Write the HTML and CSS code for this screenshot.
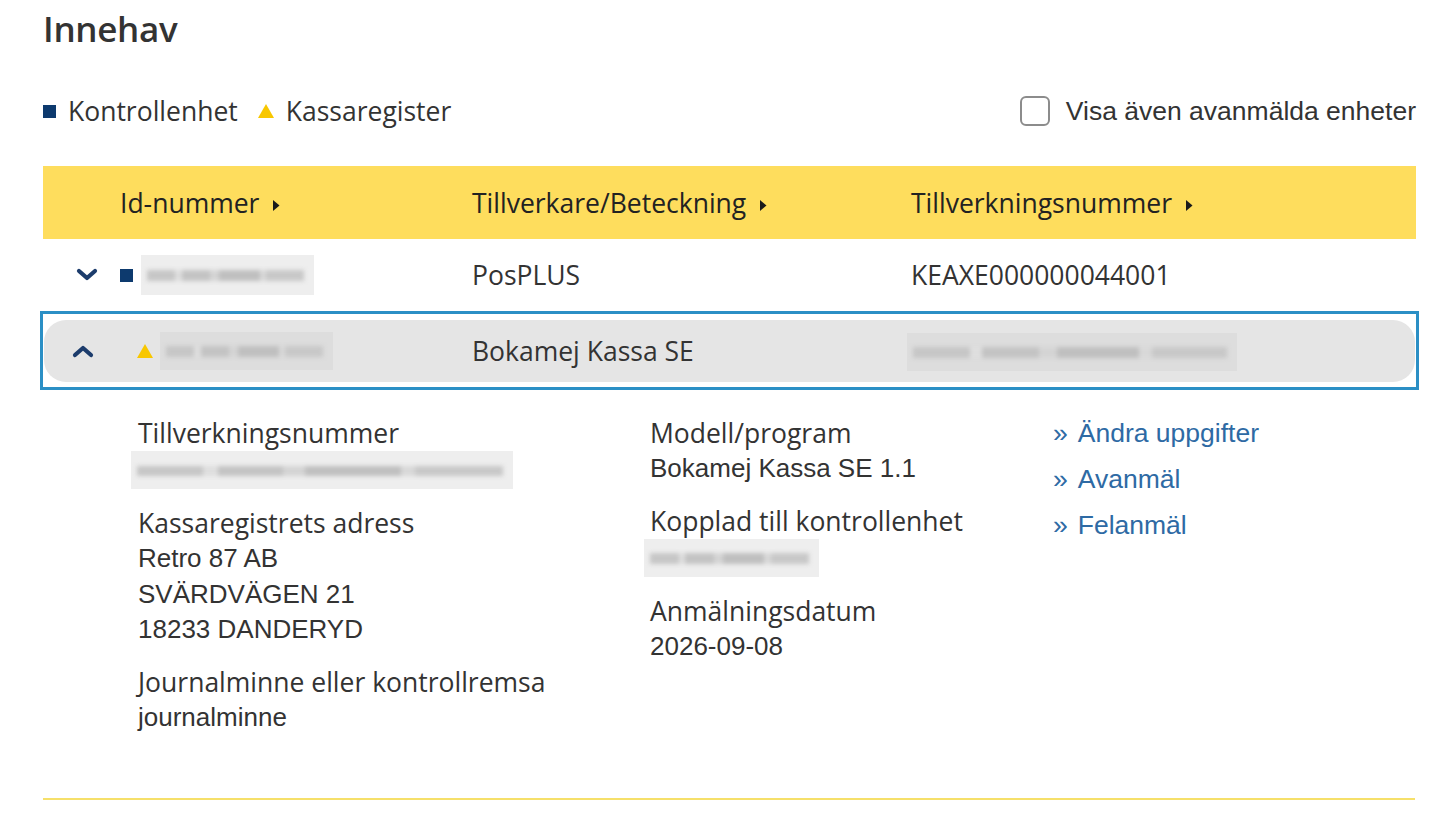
FILE: index.html
```html
<!DOCTYPE html>
<html lang="sv">
<head>
  <meta charset="UTF-8" />
  <meta name="viewport" content="width=device-width, initial-scale=1" />
  <title>Innehav</title>
  <link rel="stylesheet" href="styles.css">
</head>
<body>
  <main class="holdings">
    <h1>Innehav</h1>

    <div class="toolbar">
      <div class="legend">
        <span class="mark-square"></span>
        <span class="legend-text">Kontrollenhet</span>
        <span class="mark-triangle"></span>
        <span class="legend-text">Kassaregister</span>
      </div>
      <label class="show-all">
        <span class="checkbox"></span>
        Visa även avanmälda enheter
      </label>
    </div>

    <div class="units">
      <!-- table head -->
      <div class="units-head units-grid">
        <span></span>
        <span class="sort">Id-nummer <svg class="caret" width="8" height="13" viewBox="0 0 8 13"><path d="M1 1 L7.5 6.5 L1 12 Z" fill="#1a1a1a"/></svg></span>
        <span class="sort">Tillverkare/Beteckning <svg class="caret" width="8" height="13" viewBox="0 0 8 13"><path d="M1 1 L7.5 6.5 L1 12 Z" fill="#1a1a1a"/></svg></span>
        <span class="sort">Tillverkningsnummer <svg class="caret" width="8" height="13" viewBox="0 0 8 13"><path d="M1 1 L7.5 6.5 L1 12 Z" fill="#1a1a1a"/></svg></span>
      </div>

      <!-- control unit -->
      <div class="units-row units-grid">
        <span class="toggle">
          <svg width="22" height="14" viewBox="0 0 22 14"><polyline points="3,3 11,10 19,3" fill="none" stroke="#1c3c6c" stroke-width="4.2" stroke-linecap="round" stroke-linejoin="round"/></svg>
        </span>
        <span class="id-cell">
          <span class="mark-square"></span>
          <span class="masked masked-id"><i></i></span>
        </span>
        <span>PosPLUS</span>
        <span>KEAXE000000044001</span>
      </div>

      <!-- expanded cash register -->
      <div class="row-focus">
        <div class="units-row units-grid is-open">
          <span class="toggle">
            <svg width="22" height="14" viewBox="0 0 22 14"><polyline points="3,11 11,4 19,11" fill="none" stroke="#1c3c6c" stroke-width="4.2" stroke-linecap="round" stroke-linejoin="round"/></svg>
          </span>
          <span class="id-cell">
            <span class="mark-triangle"></span>
            <span class="masked masked-id"><i></i></span>
          </span>
          <span>Bokamej Kassa SE</span>
          <span><span class="masked masked-serial"><i></i></span></span>
        </div>
      </div>

      <div class="details">
        <div class="details-col">
          <div class="field">
            <div class="field-label">Tillverkningsnummer</div>
            <div class="field-value"><span class="masked masked-long"><i></i></span></div>
          </div>
          <div class="field">
            <div class="field-label">Kassaregistrets adress</div>
            <div class="field-value">Retro 87 AB</div>
            <div class="field-value">SVÄRDVÄGEN 21</div>
            <div class="field-value">18233 DANDERYD</div>
          </div>
          <div class="field">
            <div class="field-label">Journalminne eller kontrollremsa</div>
            <div class="field-value">journalminne</div>
          </div>
        </div>

        <div class="details-col">
          <div class="field">
            <div class="field-label">Modell/program</div>
            <div class="field-value">Bokamej Kassa SE 1.1</div>
          </div>
          <div class="field">
            <div class="field-label">Kopplad till kontrollenhet</div>
            <div class="field-value"><span class="masked masked-short"><i></i></span></div>
          </div>
          <div class="field">
            <div class="field-label">Anmälningsdatum</div>
            <div class="field-value">2026-09-08</div>
          </div>
        </div>

        <ul class="actions">
          <li><a href="#">Ändra uppgifter</a></li>
          <li><a href="#">Avanmäl</a></li>
          <li><a href="#">Felanmäl</a></li>
        </ul>
      </div>
    </div>

    <div class="end-line"></div>
  </main>
</body>
</html>
```

FILE: styles.css
```css
*, *::before, *::after {
  box-sizing: border-box;
}

body {
  margin: 0;
  padding: 0;
  background: #fff;
  color: #333;
  font-family: 'Open Sans', 'Liberation Sans', sans-serif;
}

.holdings {
  padding: 5px 40px 0 43px;
}

h1 {
  margin: 0;
  font-size: 35px;
  font-weight: 600;
  line-height: 48px;
  color: #333;
  letter-spacing: -0.3px;
}

/* legend + checkbox */
.toolbar {
  display: flex;
  justify-content: space-between;
  align-items: center;
  margin-top: 40px;
  height: 36px;
}

.legend {
  display: flex;
  align-items: center;
  font-size: 26.5px;
}

.legend .legend-text {
  margin-left: 12px;
  margin-right: 20px;
}

.mark-square {
  display: inline-block;
  width: 13px;
  height: 13px;
  background: #0d3a6e;
}

.mark-triangle {
  display: inline-block;
  width: 0;
  height: 0;
  border-left: 8px solid transparent;
  border-right: 8px solid transparent;
  border-bottom: 14px solid #f8c700;
}

.show-all {
  display: flex;
  align-items: center;
  font-family: 'Liberation Sans', Arial, sans-serif;
  font-size: 26.5px;
  color: #333;
  cursor: pointer;
}

.checkbox {
  width: 30px;
  height: 30px;
  margin-right: 16px;
  border: 2px solid #8c8c8c;
  border-radius: 6px;
  background: #fff;
}

/* table */
.units {
  margin-top: 37px;
}

.units-grid {
  display: grid;
  grid-template-columns: 77px 352px 439px 1fr;
  align-items: center;
}

.units-head {
  height: 73px;
  background: #fedd5d;
  font-size: 26.5px;
  color: #222;
}

.sort .caret {
  margin-left: 6px;
  vertical-align: 1px;
}

.units-row {
  height: 72px;
  font-size: 26.5px;
  color: #333;
}

.toggle {
  display: flex;
  justify-content: center;
  padding-left: 10px;
}

.id-cell {
  display: flex;
  align-items: center;
  gap: 8px;
}

.row-focus {
  margin: 0 -3px;
  padding: 6px 1px 5px 1px;
  border: 3px solid #2b8fc5;
}

.units-row.is-open {
  height: 62px;
  background: #e5e5e5;
  border-radius: 22px;
  grid-template-columns: 93px 335px 439px 1fr;
}

.units-row.is-open .toggle {
  justify-content: flex-start;
  padding-left: 28px;
}

.units-row.is-open .id-cell {
  gap: 7px;
}

/* blurred values */
.masked {
  display: inline-block;
  position: relative;
  overflow: hidden;
  background: #eeeeee;
  vertical-align: middle;
}

.masked i {
  position: absolute;
  left: 6px;
  right: 10px;
  top: 38%;
  height: 28%;
  background: linear-gradient(90deg, #c6c6c6 0 18%, #dedede 18% 22%, #c3c3c3 22% 40%, #d4d4d4 40% 46%, #bfbfbf 46% 72%, #d8d8d8 72% 76%, #c8c8c8 76% 100%);
  filter: blur(2px);
}

.masked-id {
  width: 173px;
  height: 40px;
}

.units-row.is-open .masked-id {
  width: 173px;
  height: 38px;
  background: #dddddd;
}

.masked-serial {
  width: 330px;
  height: 38px;
  margin-left: -4px;
  background: #dddddd;
}

.masked-long {
  width: 382px;
  height: 38px;
  margin-left: -7px;
}

.masked-short {
  width: 175px;
  height: 38px;
  margin-left: -6px;
}

/* expanded details */
.details {
  display: grid;
  grid-template-columns: 512px 403px 1fr;
  padding: 25px 0 0 95px;
}

.field {
  margin-bottom: 16px;
}

.field-label {
  font-size: 26.5px;
  line-height: 36px;
  color: #333;
}

.field-value {
  font-family: 'Liberation Sans', Arial, sans-serif;
  font-size: 26px;
  line-height: 35.5px;
  color: #333;
}

.actions {
  list-style: none;
  margin: 0;
  padding: 0;
}

.actions li {
  height: 46px;
  line-height: 36px;
}

.actions a {
  font-family: 'Liberation Sans', Arial, sans-serif;
  font-size: 26.5px;
  color: #2e6aa4;
  text-decoration: none;
}

.actions a::before {
  content: '\00BB';
  margin-right: 10px;
}

.end-line {
  margin-top: 47px;
  height: 2px;
  background: #f6e06a;
  margin-right: 1px;
}
```
